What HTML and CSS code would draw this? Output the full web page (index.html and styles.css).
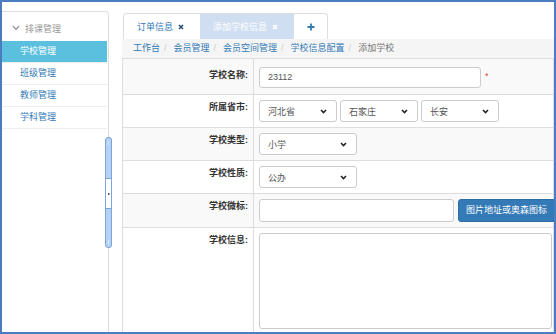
FILE: index.html
```html
<!DOCTYPE html>
<html>
  <head>
    <meta charset="utf-8">
    <meta name="viewport" content="width=device-width">
    <title>添加学校信息</title>
    <link rel="stylesheet" href="styles.css">
  </head>
  <body>
    <div class="frame">
      <!-- Left menu -->
      <div class="sidebar">
        <div class="menu-head">
          <svg class="caret" width="8" height="6" viewBox="0 0 8 6"><polyline points="1,1 4,4.5 7,1" /></svg>
          <span>排课管理</span>
        </div>
        <ul class="menu">
          <li class="active">学校管理</li>
          <li>班级管理</li>
          <li>教师管理</li>
          <li>学科管理</li>
        </ul>
      </div>

      <!-- Splitter between menu and content -->
      <div class="splitter">
        <svg class="handle" width="8" height="112" viewBox="0 0 8 112">
          <rect x="0.5" y="0.5" width="6" height="110" rx="2.5" class="bar" />
          <rect x="0.5" y="41.5" width="6" height="30" class="mid" />
          <rect x="3" y="56" width="1.5" height="2" class="dot" />
          <line x1="3.5" y1="4" x2="3.5" y2="8" class="tick" />
          <line x1="3.5" y1="103" x2="3.5" y2="107" class="tick" />
        </svg>
      </div>

      <div class="main">
        <div class="tabs">
          <div class="tab first">订单信息
            <svg class="close" width="6" height="6" viewBox="0 0 6 6"><path d="M1 1L5 5M5 1L1 5" /></svg>
          </div>
          <div class="tab current">添加学校信息
            <svg class="close" width="6" height="6" viewBox="0 0 6 6"><path d="M1 1L5 5M5 1L1 5" /></svg>
          </div>
          <div class="tab add">
            <svg width="8" height="8" viewBox="0 0 8 8"><path d="M4 0.5V7.5M0.5 4H7.5" /></svg>
          </div>
        </div>

        <div class="crumbs">
          <a>工作台</a><span class="sep">/</span><a>会员管理</a><span class="sep">/</span><a>会员空间管理</a><span class="sep">/</span><a>学校信息配置</a><span class="sep">/</span><span class="here">添加学校</span>
        </div>

        <div class="form">
          <div class="row odd top">
            <div class="label">学校名称:</div>
            <div class="value">
              <div class="input name">23112</div>
              <span class="req">*</span>
            </div>
          </div>
          <div class="row">
            <div class="label">所属省市:</div>
            <div class="value">
              <div class="select small"><span>河北省</span><svg class="chev" width="7" height="5" viewBox="0 0 7 5"><polyline points="1,1 3.5,3.5 6,1" /></svg></div>
              <div class="select small"><span>石家庄</span><svg class="chev" width="7" height="5" viewBox="0 0 7 5"><polyline points="1,1 3.5,3.5 6,1" /></svg></div>
              <div class="select small"><span>长安</span><svg class="chev" width="7" height="5" viewBox="0 0 7 5"><polyline points="1,1 3.5,3.5 6,1" /></svg></div>
            </div>
          </div>
          <div class="row odd">
            <div class="label">学校类型:</div>
            <div class="value">
              <div class="select"><span>小学</span><svg class="chev" width="7" height="5" viewBox="0 0 7 5"><polyline points="1,1 3.5,3.5 6,1" /></svg></div>
            </div>
          </div>
          <div class="row">
            <div class="label">学校性质:</div>
            <div class="value">
              <div class="select"><span>公办</span><svg class="chev" width="7" height="5" viewBox="0 0 7 5"><polyline points="1,1 3.5,3.5 6,1" /></svg></div>
            </div>
          </div>
          <div class="row odd">
            <div class="label">学校微标:</div>
            <div class="value">
              <div class="input logo"></div>
              <div class="btn">图片地址或奥森图标</div>
            </div>
          </div>
          <div class="row last">
            <div class="label">学校信息:</div>
            <div class="value">
              <div class="textarea"></div>
            </div>
          </div>
        </div>
      </div>
    </div>
  </body>
</html>
```

FILE: styles.css
```css
body {
  margin: 0;
  font-family: "Liberation Sans", "Noto Sans CJK SC", sans-serif;
  font-size: 9px;
  color: #333;
  background: #fff;
}

.frame {
  width: 556px;
  height: 334px;
  box-sizing: border-box;
  border: 2px solid #4a7cbf;
  display: flex;
  overflow: hidden;
}

/* Left menu */
.sidebar {
  width: 106px;
  margin-top: 9px;
  border-top: 1px solid #ddd;
  border-right: 1px solid #ddd;
  border-top-right-radius: 4px;
}
.menu-head {
  height: 26px;
  padding: 3px 0 0 10px;
  display: flex;
  align-items: center;
  gap: 5px;
  color: #999;
}
.caret polyline {
  fill: none;
  stroke: #999;
  stroke-width: 1.4;
}
.menu {
  list-style: none;
  margin: 0;
  padding: 0;
}
.menu li {
  height: 21px;
  line-height: 21px;
  padding-left: 18px;
  margin-right: 1px;
  border-bottom: 1px solid #eee;
  color: #337ab7;
}
.menu li.active {
  background: #5bc0de;
  color: #fff;
}

/* Splitter */
.splitter {
  width: 13px;
  flex: none;
  position: relative;
}
.handle {
  position: absolute;
  left: -4px;
  top: 135px;
}
.handle .bar {
  fill: #b5d1f3;
  stroke: #7ca5db;
}
.handle .mid {
  fill: #fff;
  stroke: #7ca5db;
}
.handle .dot {
  fill: #556;
}
.handle .tick {
  stroke: #dfeaf8;
}

/* Content */
.main {
  flex: 1;
  min-width: 0;
  margin-top: 11px;
  display: flex;
  flex-direction: column;
}

.tabs {
  flex: none;
  display: flex;
  align-self: flex-start;
  margin-left: 1px;
  height: 25px;
  border: 1px solid #ddd;
  border-bottom: 0;
  border-radius: 4px 4px 0 0;
}
.tab {
  display: flex;
  align-items: center;
  gap: 5px;
  box-sizing: border-box;
  padding-left: 13px;
}
.tab.first {
  width: 76px;
  color: #337ab7;
}
.tab.first .close path {
  stroke: #23527c;
}
.tab.current {
  width: 94px;
  background: #d0def1;
  color: #fff;
}
.tab.current .close path {
  stroke: #fff;
}
.tab.add {
  width: 33px;
  padding-left: 13px;
}
.tab.add path {
  stroke: #337ab7;
  stroke-width: 1.8;
}
.close path {
  stroke-width: 1.6;
}

.crumbs {
  flex: none;
  height: 19px;
  line-height: 19px;
  padding-left: 11px;
  background: #f5f5f5;
  white-space: nowrap;
}
.crumbs a {
  color: #337ab7;
}
.crumbs .sep {
  color: #ccc;
  margin: 0 7px 0 4px;
}
.crumbs .here {
  color: #777;
}

.form {
  flex: none;
  border-top: 1px solid #ddd;
  border-left: 1px solid #ddd;
  border-right: 1px solid #ddd;
}
.row {
  display: grid;
  grid-template-columns: 131px 1fr;
  border-bottom: 1px solid #ddd;
}
.row.odd {
  background: #f9f9f9;
}
.row.last {
  border-bottom: 0;
}
.label {
  border-right: 1px solid #ddd;
  text-align: right;
  padding: 6px 5px 0 0;
  line-height: 12px;
  font-weight: bold;
}
.value {
  display: flex;
  align-items: center;
  gap: 3px;
  padding: 5px 0 5px 5px;
  white-space: nowrap;
}
.row.top .label {
  padding-top: 10px;
}
.row.top .value {
  padding-top: 8px;
  padding-bottom: 6px;
}

.input,
.select,
.textarea {
  box-sizing: border-box;
  height: 22px;
  border: 1px solid #ccc;
  border-radius: 3px;
  background: #fff;
  color: #555;
}
.input {
  line-height: 20px;
  padding-left: 8px;
}
.input.name {
  width: 222px;
  height: 21px;
  line-height: 19px;
}
.input.logo {
  width: 195px;
  height: 23px;
}
.req {
  color: #e04040;
  margin-left: 1px;
  align-self: flex-start;
  margin-top: 4px;
}

.select {
  width: 98px;
  display: flex;
  align-items: center;
  justify-content: space-between;
  padding: 0 9px 0 8px;
}
.select.small {
  width: 78px;
}
.chev polyline {
  fill: none;
  stroke: #222;
  stroke-width: 1.6;
}

.btn {
  flex: none;
  width: 98px;
  height: 23px;
  box-sizing: border-box;
  margin-left: 1px;
  padding-left: 7px;
  line-height: 21px;
  background: #337ab7;
  border: 1px solid #2e6da4;
  border-radius: 3px;
  color: #fff;
}

.row.last .value {
  align-items: flex-start;
}
.textarea {
  width: 293px;
  height: 96px;
}
```
